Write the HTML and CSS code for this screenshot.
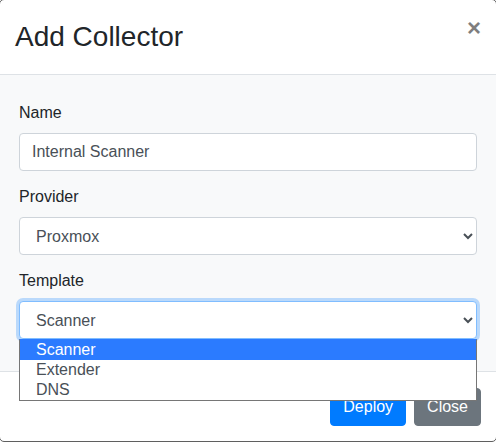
FILE: index.html
```html
<!DOCTYPE html>
<html lang="en">
<head>
<meta charset="utf-8">
<title>Add Collector</title>
<link rel="stylesheet" href="styles.css">
</head>
<body>
<div class="modal">
  <div class="modal-header">
    <h3 class="modal-title">Add Collector</h3>
    <button class="close" type="button">×</button>
  </div>
  <div class="modal-body">
    <div class="group">
      <label class="label">Name</label>
      <input class="control" type="text" value="Internal Scanner">
    </div>
    <div class="group">
      <label class="label">Provider</label>
      <select class="control">
        <option>Proxmox</option>
      </select>
    </div>
    <div class="group group-open">
      <label class="label">Template</label>
      <select class="control is-focused">
        <option>Scanner</option>
        <option>Extender</option>
        <option>DNS</option>
      </select>
      <div class="listbox">
        <div class="option selected">Scanner</div>
        <div class="option">Extender</div>
        <div class="option">DNS</div>
      </div>
    </div>
  </div>
  <div class="modal-footer">
    <button class="btn btn-primary" type="button">Deploy</button>
    <button class="btn btn-secondary" type="button">Close</button>
  </div>
</div>
</body>
</html>
```

FILE: styles.css
```css
html, body {
  margin: 0;
  padding: 0;
  background: #fff;
  overflow: hidden;
  height: 443px;
}

body {
  font-family: "Liberation Sans", Arial, sans-serif;
  font-size: 16px;
  color: #212529;
}

.modal {
  margin: -1px;
  border: 1px solid #5f5f5f;
  border-radius: 5px;
  background: #fff;
  overflow: visible;
}

.modal-header {
  display: flex;
  align-items: flex-start;
  padding: 20px 15px;
  border-bottom: 1px solid #dee2e6;
  border-radius: 5px 5px 0 0;
}

.modal-title {
  flex: 1;
  margin: 0;
  font-size: 28px;
  font-weight: 400;
  line-height: 34px;
  color: #212529;
}

.close {
  margin-top: -4px;
  padding: 0;
  border: 0;
  background: transparent;
  font-family: "Liberation Sans", Arial, sans-serif;
  font-size: 24px;
  font-weight: 700;
  line-height: 1;
  color: #000;
  opacity: .5;
  text-shadow: 0 1px 0 #fff;
}

.modal-body {
  display: flex;
  flex-direction: column;
  gap: 14px;
  padding: 26px 19px 32px;
  background: #f8f9fa;
}

.group {
  display: flex;
  flex-direction: column;
}

.group-open {
  position: relative;
}

.label {
  display: block;
  line-height: 24px;
  margin-bottom: 8px;
  color: #212529;
}

.control {
  display: block;
  box-sizing: border-box;
  width: 100%;
  height: 38px;
  margin: 0;
  padding: 6px 12px;
  font-family: "Liberation Sans", Arial, sans-serif;
  font-size: 16px;
  line-height: 24px;
  color: #495057;
  background: #fff;
  border: 1px solid #ced4da;
  border-radius: 4px;
  outline: none;
}

.is-focused {
  border-color: #80bdff;
  box-shadow: 0 0 0 3px rgba(0, 123, 255, .25);
}

.listbox {
  position: absolute;
  top: 100%;
  left: 0;
  right: 0;
  z-index: 10;
  box-sizing: border-box;
  border: 1px solid #767676;
  border-top-color: #2b7bff;
  background: #fff;
}

.option {
  height: 20px;
  line-height: 20px;
  padding-left: 16px;
  color: #495057;
}

.option.selected {
  background: #2b7bff;
  color: #fff;
}

.modal-footer {
  display: flex;
  justify-content: flex-end;
  gap: 8px;
  padding: 16px 15px 15px;
  border-top: 1px solid #dee2e6;
  border-radius: 0 0 5px 5px;
}

.btn {
  height: 38px;
  padding: 6px 12px;
  font-family: "Liberation Sans", Arial, sans-serif;
  font-size: 16px;
  line-height: 24px;
  border: 1px solid transparent;
  border-radius: 4px;
  color: #fff;
}

.btn-primary {
  background: #007bff;
  border-color: #007bff;
}

.btn-secondary {
  background: #6c757d;
  border-color: #6c757d;
}
```
